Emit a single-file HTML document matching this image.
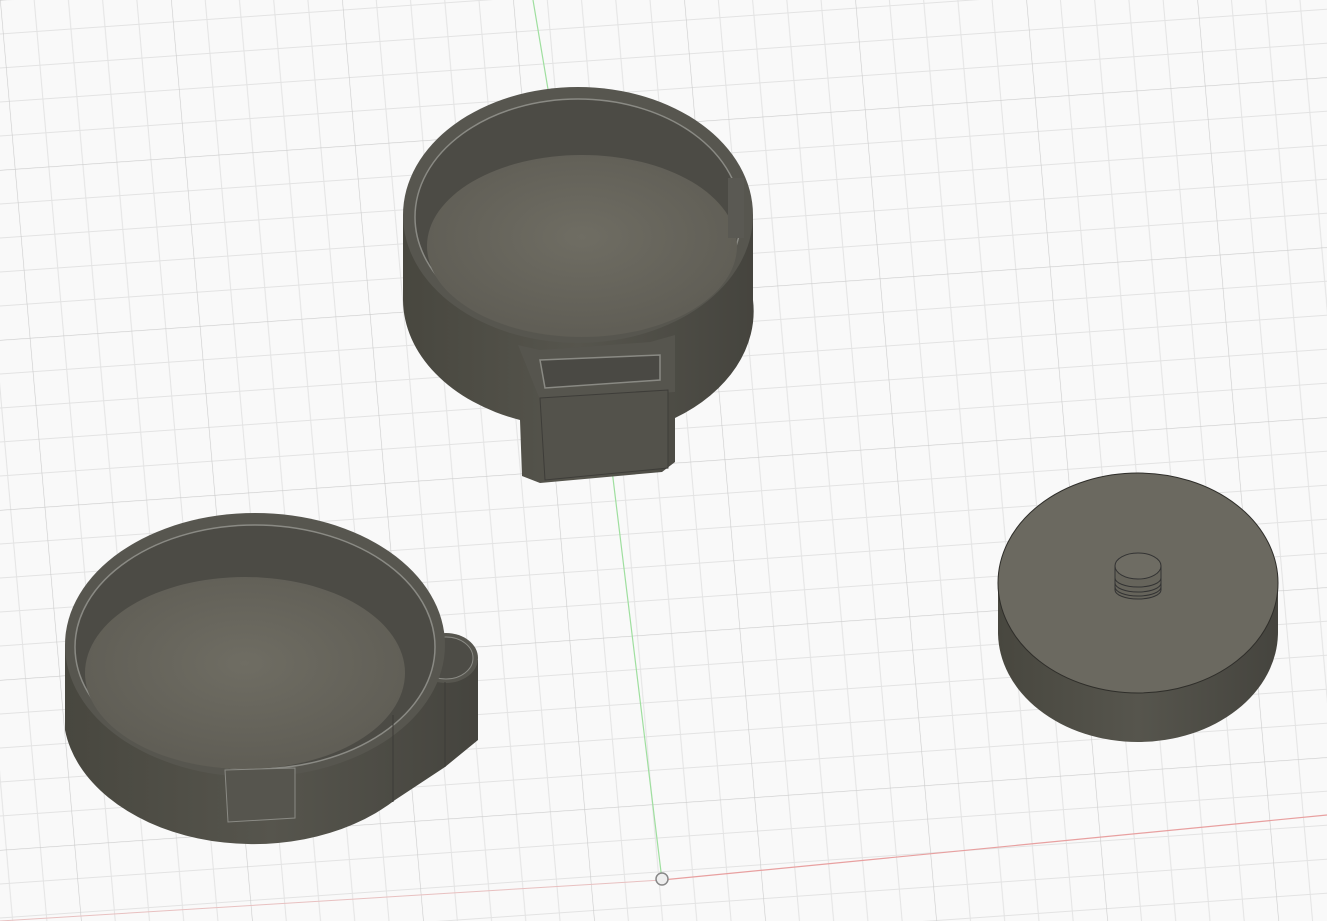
<!DOCTYPE html>
<html><head><meta charset="utf-8"><style>
html,body{margin:0;padding:0;background:#f9f9f9;overflow:hidden}
svg{display:block}
</style></head><body>
<svg width="1327" height="921" viewBox="0 0 1327 921" xmlns="http://www.w3.org/2000/svg">
<defs>
<pattern id="g" width="170" height="170" patternUnits="userSpaceOnUse" patternTransform="skewY(-4) skewX(5)">
<path d="M34 0V170M68 0V170M102 0V170M136 0V170M0 34H170M0 68H170M0 102H170M0 136H170" stroke="#e3e3e3" stroke-width="1" fill="none"/>
<path d="M0 0V170M0 0H170" stroke="#cbcbcb" stroke-width="1.2" fill="none"/>
</pattern>
<radialGradient id="fl" cx="0.5" cy="0.45" r="0.6"><stop offset="0" stop-color="#6f6d63"/><stop offset="1" stop-color="#5e5c54"/></radialGradient>
<linearGradient id="sd" x1="0" x2="1"><stop offset="0" stop-color="#48473f"/><stop offset="0.5" stop-color="#56554d"/><stop offset="1" stop-color="#45443e"/></linearGradient>
</defs>
<rect width="1327" height="921" fill="#f9f9f9"/>
<rect width="1327" height="921" fill="url(#g)"/>
<path d="M533 0 L612 470 L662 880" stroke="#9fdf9f" stroke-width="1.2" fill="none"/>
<path d="M662 880 L1327 815" stroke="#e8a0a0" stroke-width="1.2" fill="none"/>
<path d="M0 921 L662 880" stroke="#e8c0c0" stroke-width="1" fill="none"/>
<circle cx="662" cy="879" r="6" fill="#eee" stroke="#888" stroke-width="1.5"/>

<!-- top object -->
<path d="M403 215 L403 300 A175 128 0 0 0 520 420 L522 476 L540 483 L662 472 L675 462 L675 418 A175 128 0 0 0 753 300 L753 215 Z" fill="url(#sd)"/>
<ellipse cx="578" cy="215" rx="175" ry="128" fill="#57564f"/>
<ellipse cx="578" cy="217" rx="163" ry="118" fill="#4c4b45" stroke="#8a8a84" stroke-width="1.5"/>
<ellipse cx="582" cy="246" rx="155" ry="91" fill="url(#fl)"/>
<path d="M518 345 L540 350 L650 342 L675 335 L675 392 L540 400 Z" fill="#56554e"/>
<path d="M540 360 L660 355 L660 380 L545 388 Z" fill="#4a4944" stroke="#8a8a84" stroke-width="1.5"/>
<path d="M540 398 L668 390 L668 468 L545 480 Z" fill="#53524b" stroke="#3e3d39"/>
<rect x="728" y="178" width="16" height="60" fill="#5a5953"/>

<!-- bottom-left object -->
<path d="M65 645 L65 730 A190 132 0 0 0 395 800 L445 767 L478 740 L478 660 L440 640 Z" fill="url(#sd)"/>
<ellipse cx="446" cy="658" rx="32" ry="25" fill="#57564f"/>
<ellipse cx="446" cy="658" rx="27" ry="21" fill="#4d4c46" stroke="#8a8a84"/>
<ellipse cx="255" cy="645" rx="190" ry="132" fill="#57564f"/>
<ellipse cx="255" cy="647" rx="180" ry="122" fill="#4c4b45" stroke="#8a8a84" stroke-width="1.5"/>
<ellipse cx="245" cy="673" rx="160" ry="96" fill="url(#fl)"/>
<path d="M225 770 L295 768 L295 818 L228 822 Z" fill="#56554e" stroke="#8a8a84"/>
<line x1="393" y1="715" x2="393" y2="802" stroke="#3c3b37"/>
<line x1="445" y1="682" x2="445" y2="767" stroke="#3c3b37"/>

<!-- puck -->
<path d="M998 583 L998 632 A140 110 0 0 0 1278 632 L1278 583 Z" fill="url(#sd)"/>
<ellipse cx="1138" cy="583" rx="140" ry="110" fill="#6b6960" stroke="#2f2e2a"/>
<path d="M1115 566 L1115 590 A23 9 0 0 0 1161 590 L1161 566 Z" fill="#66645b" stroke="#333"/>
<path d="M1115 578 A23 9 0 0 0 1161 578 M1115 583 A23 9 0 0 0 1161 583 M1115 587 A23 9 0 0 0 1161 587" stroke="#333" fill="none"/>
<ellipse cx="1138" cy="566" rx="23" ry="13" fill="#6e6c63" stroke="#333"/>
</svg>
</body></html>
